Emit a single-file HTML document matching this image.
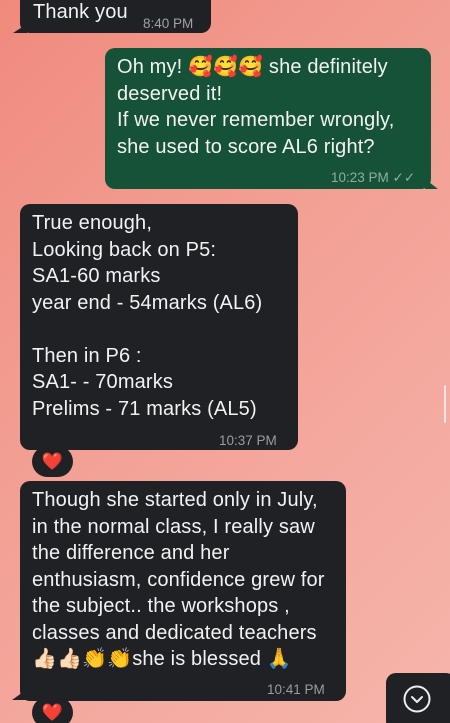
<!DOCTYPE html>
<html><head><meta charset="utf-8"><style>
html,body{margin:0;padding:0;width:450px;height:723px;overflow:hidden;}
body{background:linear-gradient(135deg,#f08a7d 0%,#f29c90 35%,#f4a89e 65%,#f6b5ab 100%);font-family:"Liberation Sans","DejaVu Sans",sans-serif;position:relative;}
.b{position:absolute;border-radius:10px;color:#f2f2f2;font-size:20px;letter-spacing:0.15px;line-height:26.5px;box-sizing:border-box;padding:5px 13px;white-space:nowrap;}
.d{background:#1f2124;}
.g{background:#165238;}
.t{position:absolute;font-size:13.5px;letter-spacing:0;color:#9a9c9e;}
.h{position:absolute;width:41px;height:31px;border-radius:16px;background:#1f2124;font-size:17px;text-align:center;line-height:31px;}
</style></head><body>
<div class="b d" style="left:20px;top:-10px;width:191px;height:43px;padding-top:9px;">Thank you<span class="t" style="left:123px;top:21px;color:#a0a2a4">8:40 PM</span></div>
<div style="position:absolute;left:13px;top:24px;width:0;height:0;border-right:14px solid #1f2124;border-top:9px solid transparent;"></div>

<div class="b g" style="left:105px;top:48px;width:326px;height:141px;padding:6px 12px;">Oh my! 🥰🥰🥰 she definitely<br>deserved it!<br>If we never remember wrongly,<br>she used to score AL6 right?<span class="t" style="left:226px;top:117px;color:#8fae9f">10:23 PM ✓✓</span></div>
<div style="position:absolute;left:425px;top:179px;width:0;height:0;border-left:13px solid #165238;border-top:10px solid transparent;"></div>

<div class="b d" style="left:20px;top:204px;width:278px;height:246px;padding:6px 12px;">True enough,<br>Looking back on P5:<br>SA1-60 marks<br>year end - 54marks (AL6)<br><br>Then in P6 :<br>SA1- - 70marks<br>Prelims - 71 marks (AL5)<span class="t" style="left:199px;top:224px">10:37 PM</span></div>
<div class="h" style="left:32px;top:446px;">❤️</div>

<div class="b d" style="left:20px;top:481px;width:326px;height:220px;padding:6px 12px;">Though she started only in July,<br>in the normal class, I really saw<br>the difference and her<br>enthusiasm, confidence grew for<br>the subject.. the workshops ,<br>classes and dedicated teachers<br>👍🏻👍🏻👏👏she is blessed 🙏<span class="t" style="left:247px;top:196px">10:41 PM</span></div>
<div style="position:absolute;left:12px;top:690px;width:0;height:0;border-right:14px solid #1f2124;border-top:10px solid transparent;"></div>
<div class="h" style="left:32px;top:697px;">❤️</div>

<div style="position:absolute;left:386px;top:673px;width:70px;height:58px;border-radius:10px;background:#1f2124;"></div>
<svg style="position:absolute;left:402px;top:684px" width="30" height="30" viewBox="0 0 30 30"><circle cx="15" cy="15" r="12.5" fill="none" stroke="#eee" stroke-width="2"/><path d="M10 13l5 5 5-5" fill="none" stroke="#eee" stroke-width="2" stroke-linecap="round" stroke-linejoin="round"/></svg>
<div style="position:absolute;left:444px;top:385px;width:2px;height:38px;background:#fff;opacity:.7;border-radius:1px"></div>
</body></html>
